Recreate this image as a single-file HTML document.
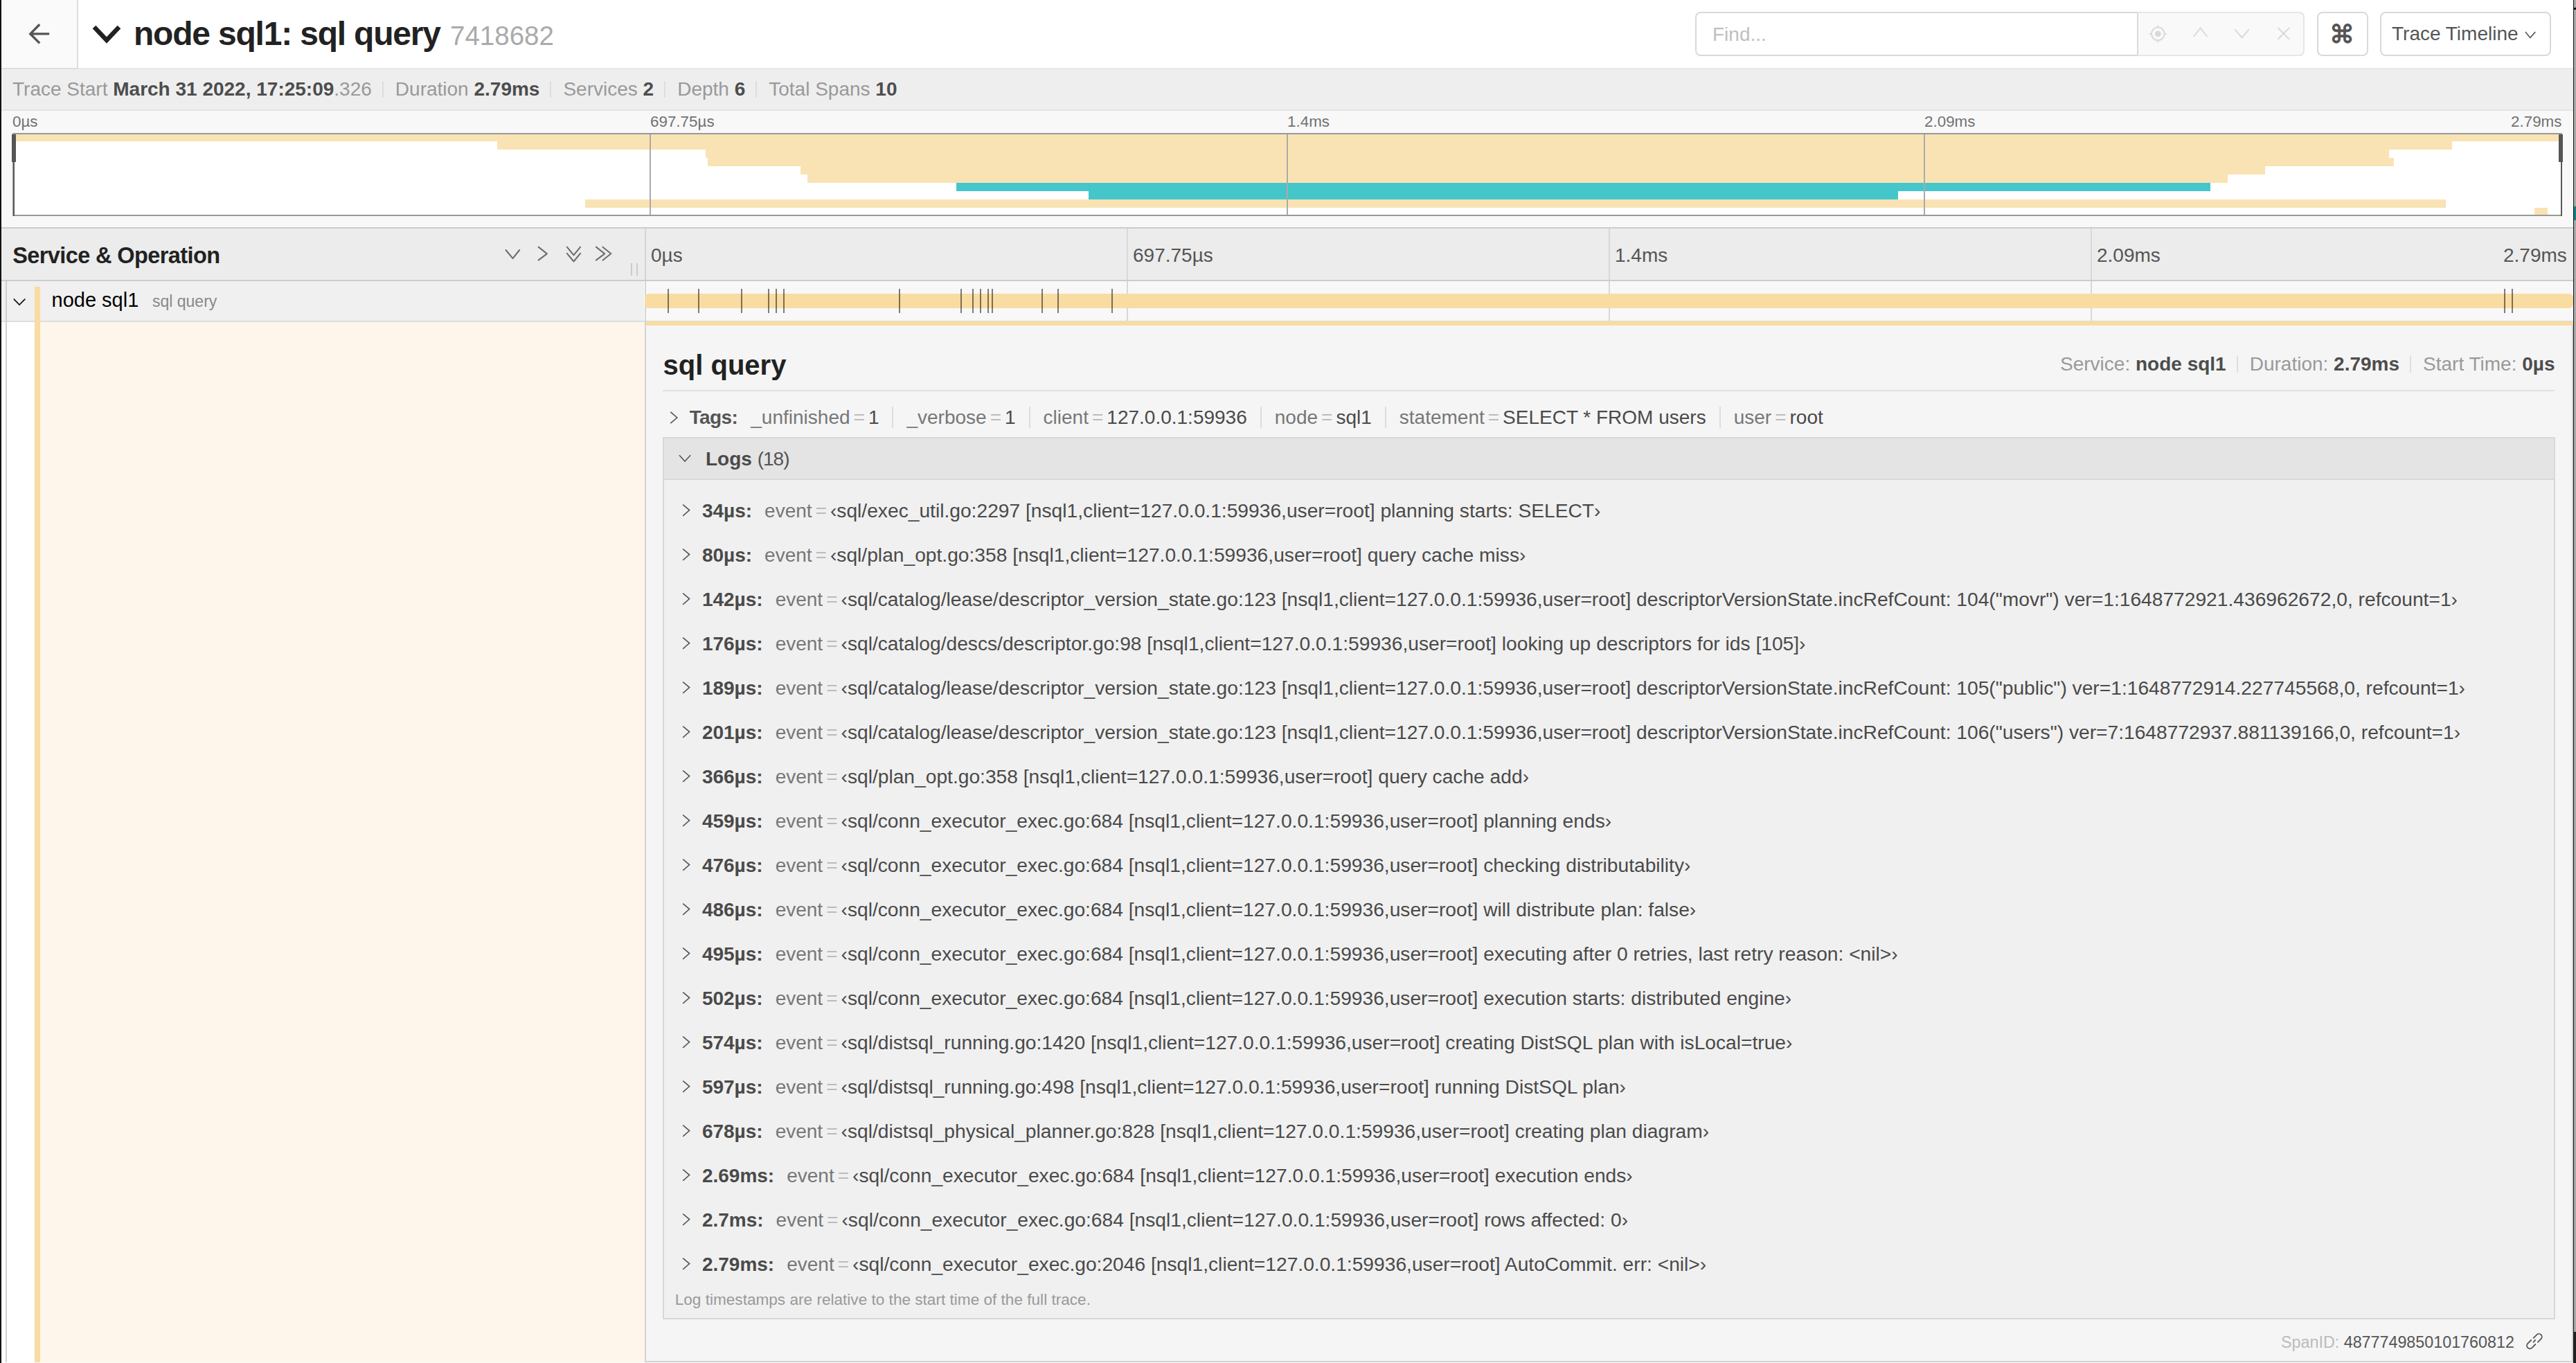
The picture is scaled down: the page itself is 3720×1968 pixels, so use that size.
<!DOCTYPE html><html><head><meta charset="utf-8"><style>
*{margin:0;padding:0}
html,body{width:3720px;height:1968px;overflow:hidden;background:#fff}
body{position:relative;font-family:"Liberation Sans", sans-serif}
body>div,body>svg{position:absolute}
.t{line-height:1;white-space:pre}
.lb{color:#999}
.vb{color:#4d4d4d;font-weight:bold}
.sep{display:inline-block;width:2px;height:24px;background:#ddd;vertical-align:-3px;margin:0 17px 0 15px}
.ti{margin-left:19px;padding-right:19px;border-right:2px solid #ddd}
.ti.last{border-right:none;padding-right:0}
</style></head><body>
<div style="left:0px;top:0px;width:3720px;height:98px;background:#fff;"></div>
<div style="left:0px;top:98px;width:3720px;height:2px;background:#e8e8e8;"></div>
<div style="left:2px;top:0px;width:109px;height:98px;background:#fafafa;"></div>
<div style="left:111px;top:0px;width:2px;height:100px;background:#ddd;"></div>
<div style="left:2px;top:98px;width:111px;height:2px;background:#ddd;"></div>
<svg style="left:40px;top:33px" width="34" height="32" viewBox="0 0 34 32"><path d="M31.2 15.9H5 M17.2 2.2 L3.8 15.9 L17.2 29.4" fill="none" stroke="#555" stroke-width="3.4" stroke-linecap="butt"/></svg>
<svg style="left:132px;top:34px" width="44" height="32" viewBox="0 0 44 32"><path d="M4 5 L22 24 L40 5" fill="none" stroke="#222" stroke-width="6.5"/></svg>
<div class="t" style="left:193px;top:25.1px;font-size:48px;color:#222;font-weight:bold;letter-spacing:-1.2px;">node sql1: sql query</div>
<div class="t" style="left:650px;top:33.1px;font-size:38.5px;color:#aaa;">7418682</div>
<div style="left:2448px;top:17px;width:880px;height:64px;box-sizing:border-box;border:2px solid #d9d9d9;border-radius:8px;background:#fff"></div>
<div style="left:3086px;top:17px;width:242px;height:64px;box-sizing:border-box;border:2px solid #e6e6e6;border-left:2px solid #d9d9d9;border-radius:0 8px 8px 0;background:#f9f9f9"></div>
<div class="t" style="left:2473px;top:36.3px;font-size:28px;color:#bfbfbf;">Find...</div>
<svg style="left:3080px;top:10px" width="240" height="70" viewBox="3080 10 240 70"><g fill="none" stroke="#d9d9d9" stroke-width="2"><circle cx="3116.3" cy="48.9" r="9.3"/><path d="M3116.3 36.5v3.6M3116.3 57.7v3.6M3103.9 48.9h3.6M3125.1 48.9h3.6"/><path d="M3167.8 53 L3177.6 40.5 L3187.6 53"/><path d="M3227.4 42.4 L3237.7 54.4 L3247.7 42.4"/><path d="M3289.4 40 L3306.1 56.8 M3306.1 40 L3289.4 56.8"/></g><circle cx="3116.3" cy="48.9" r="4.4" fill="#d9d9d9"/></svg>
<div style="left:3346px;top:17px;width:74px;height:64px;box-sizing:border-box;border:2px solid #d9d9d9;border-radius:8px;background:#fff"></div>
<div class="t" style="left:3364px;top:31.5px;font-size:36px;color:#555;font-weight:bold;">&#8984;</div>
<div style="left:3437px;top:17px;width:247px;height:64px;box-sizing:border-box;border:2px solid #d9d9d9;border-radius:8px;background:#fff"></div>
<div class="t" style="left:3454px;top:35.3px;font-size:28px;color:#555;">Trace Timeline</div>
<svg style="left:3640px;top:40px" width="30" height="20" viewBox="3640 40 30 20"><path d="M3646.9 46.1 L3653.8 54.6 L3661.3 46.1" fill="none" stroke="#555" stroke-width="1.6"/></svg>
<div style="left:0px;top:100px;width:3720px;height:58px;background:#eee;"></div>
<div style="left:0px;top:158px;width:3720px;height:2px;background:#e4e4e4;"></div>
<div class="t" style="left:18px;top:115.3px;font-size:28px;color:#999;"><span class="lb">Trace Start</span> <b class="vb">March 31 2022, 17:25:09</b><span class="lb">.326</span><i class="sep"></i><span class="lb">Duration</span> <b class="vb">2.79ms</b><i class="sep"></i><span class="lb">Services</span> <b class="vb">2</b><i class="sep"></i><span class="lb">Depth</span> <b class="vb">6</b><i class="sep"></i><span class="lb">Total Spans</span> <b class="vb">10</b></div>
<div style="left:0px;top:160px;width:3720px;height:168px;background:#f8f8f8;"></div>
<div style="left:18px;top:192px;width:3682px;height:120px;background:#fff;"></div>
<div style="left:20px;top:192px;width:3678px;height:12px;background:#f9e3b4;"></div>
<div style="left:718px;top:204px;width:2823px;height:12px;background:#f9e3b4;"></div>
<div style="left:1019px;top:216px;width:2431px;height:12px;background:#f9e3b4;"></div>
<div style="left:1022px;top:228px;width:2435px;height:12px;background:#f9e3b4;"></div>
<div style="left:1156px;top:240px;width:2115px;height:12px;background:#f9e3b4;"></div>
<div style="left:1166px;top:252px;width:2051px;height:12px;background:#f9e3b4;"></div>
<div style="left:1381px;top:264px;width:1811px;height:12px;background:#45c6cb;"></div>
<div style="left:1572px;top:276px;width:1169px;height:12px;background:#45c6cb;"></div>
<div style="left:845px;top:288px;width:2687px;height:12px;background:#f9e3b4;"></div>
<div style="left:3660px;top:300px;width:19px;height:12px;background:#f9e3b4;"></div>
<div style="left:938px;top:192px;width:2px;height:120px;background:#aaa;"></div>
<div style="left:1858px;top:192px;width:2px;height:120px;background:#aaa;"></div>
<div style="left:2778px;top:192px;width:2px;height:120px;background:#aaa;"></div>
<div style="left:18px;top:192px;width:3682px;height:120px;box-sizing:border-box;border:2px solid #999"></div>
<div style="left:19px;top:194px;width:2px;height:118px;background:#5a5a5a;"></div>
<div style="left:3698px;top:194px;width:2px;height:118px;background:#5a5a5a;"></div>
<div style="left:17px;top:194px;width:6px;height:40px;background:#555;"></div>
<div style="left:3695px;top:194px;width:6px;height:40px;background:#555;"></div>
<div class="t" style="left:18px;top:165.2px;font-size:22.4px;color:#717171;">0&micro;s</div>
<div class="t" style="left:939px;top:165.2px;font-size:22.4px;color:#717171;">697.75&micro;s</div>
<div class="t" style="left:1859px;top:165.2px;font-size:22.4px;color:#717171;">1.4ms</div>
<div class="t" style="left:2779px;top:165.2px;font-size:22.4px;color:#717171;">2.09ms</div>
<div class="t" style="left:3626px;top:165.2px;font-size:22.4px;color:#717171;">2.79ms</div>
<div style="left:0px;top:328px;width:3720px;height:2px;background:#ccc;"></div>
<div style="left:0px;top:330px;width:3720px;height:74px;background:#ececec;"></div>
<div style="left:0px;top:404px;width:3720px;height:2px;background:#ccc;"></div>
<div class="t" style="left:18.2px;top:352.9px;font-size:32.5px;color:#222;font-weight:bold;letter-spacing:-0.6px;">Service &amp; Operation</div>
<svg style="left:710px;top:340px" width="200" height="50" viewBox="710 340 200 50"><g fill="none" stroke="#6e6e6e" stroke-width="2.1" stroke-linecap="round" stroke-linejoin="round"><path d="M730.5 361 L740.5 373.2 L750.2 361"/><path d="M777.6 356.7 L789.9 366.3 L777.6 375.7"/><path d="M818.8 356.7 L828.5 368.4 L838.1 356.7 M818.8 365.9 L828.5 377.5 L838.1 365.9"/><path d="M860.9 356.7 L873.2 366.3 L860.9 375.7 M870.4 356.7 L882.3 366.3 L870.4 375.7"/></g></svg>
<div style="left:911px;top:380px;width:2px;height:18px;background:#ccc;"></div>
<div style="left:919px;top:380px;width:2px;height:18px;background:#ccc;"></div>
<div style="left:931px;top:330px;width:2px;height:74px;background:#d5d5d5;"></div>
<div class="t" style="left:940px;top:354.7px;font-size:28px;color:#555;">0&micro;s</div>
<div class="t" style="left:1636px;top:354.7px;font-size:28px;color:#555;">697.75&micro;s</div>
<div class="t" style="left:2332px;top:354.7px;font-size:28px;color:#555;">1.4ms</div>
<div class="t" style="left:3028px;top:354.7px;font-size:28px;color:#555;">2.09ms</div>
<div class="t" style="left:3615px;top:354.7px;font-size:28px;color:#555;">2.79ms</div>
<div style="left:1627px;top:330px;width:2px;height:74px;background:#d8d8d8;"></div>
<div style="left:2323px;top:330px;width:2px;height:74px;background:#d8d8d8;"></div>
<div style="left:3019px;top:330px;width:2px;height:74px;background:#d8d8d8;"></div>
<div style="left:2px;top:406px;width:928px;height:57px;background:#f0f0f0;"></div>
<div style="left:932px;top:406px;width:2784px;height:57px;background:#f8f8f8;"></div>
<div style="left:0px;top:463px;width:3720px;height:2px;background:#ddd;"></div>
<div style="left:8px;top:406px;width:2px;height:1562px;background:#d0d0d0;"></div>
<div style="left:931px;top:406px;width:2px;height:58px;background:#d5d5d5;"></div>
<div style="left:1627px;top:406px;width:2px;height:57px;background:#d8d8d8;"></div>
<div style="left:2323px;top:406px;width:2px;height:57px;background:#d8d8d8;"></div>
<div style="left:3019px;top:406px;width:2px;height:57px;background:#d8d8d8;"></div>
<svg style="left:10px;top:420px" width="36" height="30" viewBox="10 420 36 30"><path d="M19.8 431.6 L28 440 L36.3 431.6" fill="none" stroke="#111" stroke-width="1.7"/></svg>
<div class="t" style="left:74.5px;top:419.0px;font-size:29px;color:#000;">node sql1</div>
<div class="t" style="left:220px;top:424.0px;font-size:23px;color:#888;">sql query</div>
<div style="left:931px;top:424px;width:2785px;height:21px;background:#f8dca1;border-radius:6px"></div>
<div style="left:964px;top:417px;width:2px;height:35px;background:rgba(0,0,0,0.5);"></div>
<div style="left:1008px;top:417px;width:2px;height:35px;background:rgba(0,0,0,0.5);"></div>
<div style="left:1070px;top:417px;width:2px;height:35px;background:rgba(0,0,0,0.5);"></div>
<div style="left:1109px;top:417px;width:2px;height:35px;background:rgba(0,0,0,0.5);"></div>
<div style="left:1120px;top:417px;width:2px;height:35px;background:rgba(0,0,0,0.5);"></div>
<div style="left:1131px;top:417px;width:2px;height:35px;background:rgba(0,0,0,0.5);"></div>
<div style="left:1298px;top:417px;width:2px;height:35px;background:rgba(0,0,0,0.5);"></div>
<div style="left:1387px;top:417px;width:2px;height:35px;background:rgba(0,0,0,0.5);"></div>
<div style="left:1404px;top:417px;width:2px;height:35px;background:rgba(0,0,0,0.5);"></div>
<div style="left:1415px;top:417px;width:2px;height:35px;background:rgba(0,0,0,0.5);"></div>
<div style="left:1426px;top:417px;width:2px;height:35px;background:rgba(0,0,0,0.5);"></div>
<div style="left:1432px;top:417px;width:2px;height:35px;background:rgba(0,0,0,0.5);"></div>
<div style="left:1504px;top:417px;width:2px;height:35px;background:rgba(0,0,0,0.5);"></div>
<div style="left:1527px;top:417px;width:2px;height:35px;background:rgba(0,0,0,0.5);"></div>
<div style="left:1605px;top:417px;width:2px;height:35px;background:rgba(0,0,0,0.5);"></div>
<div style="left:3616px;top:417px;width:2px;height:35px;background:rgba(0,0,0,0.5);"></div>
<div style="left:3627px;top:417px;width:2px;height:35px;background:rgba(0,0,0,0.5);"></div>
<div style="left:2px;top:465px;width:928px;height:1503px;background:#fff;"></div>
<div style="left:58px;top:465px;width:873px;height:1503px;background:#fef6ea;"></div>
<div style="left:50px;top:414px;width:8px;height:1554px;background:#f8dca1;"></div>
<div style="left:8px;top:465px;width:2px;height:1503px;background:#d0d0d0;"></div>
<div style="left:932px;top:464px;width:2784px;height:6px;background:#f8dca1;"></div>
<div style="left:932px;top:470px;width:2784px;height:1498px;background:#f5f5f5;"></div>
<div style="left:931px;top:464px;width:2px;height:1504px;background:#d3d3d3;"></div>
<div style="left:3714px;top:470px;width:2px;height:1498px;background:#d3d3d3;"></div>
<div style="left:931px;top:1965px;width:2785px;height:2px;background:#d3d3d3;"></div>
<div style="left:2px;top:1967px;width:3714px;height:1px;background:#fbfbfb;"></div>
<div class="t" style="left:957.6px;top:507.1px;font-size:40px;color:#222;font-weight:bold;">sql query</div>
<div class="t" style="right:30.5px;top:512.2px;font-size:28px;color:#999"><span class="lb">Service:</span> <b class="vb">node sql1</b><i class="sep"></i><span class="lb">Duration:</span> <b class="vb">2.79ms</b><i class="sep"></i><span class="lb">Start Time:</span> <b class="vb">0&micro;s</b></div>
<div style="left:957px;top:563px;width:2732px;height:2px;background:#e0e0e0;"></div>
<svg style="left:960px;top:588px" width="30" height="30" viewBox="960 588 30 30"><path d="M968.3 594.9 L977.8 603 L968.3 611.2" fill="none" stroke="#555" stroke-width="1.6"/></svg>
<div class="t" style="left:995.7px;top:589.4px;font-size:28px;color:#4a4a4a;"><b class="vb" style="color:#555;letter-spacing:-0.6px">Tags:</b><span class="ti"><span style="color:#777">_unfinished</span><span style="color:#bbb;padding:0 5px">=</span>1</span><span class="ti"><span style="color:#777">_verbose</span><span style="color:#bbb;padding:0 5px">=</span>1</span><span class="ti"><span style="color:#777">client</span><span style="color:#bbb;padding:0 5px">=</span>127.0.0.1:59936</span><span class="ti"><span style="color:#777">node</span><span style="color:#bbb;padding:0 5px">=</span>sql1</span><span class="ti"><span style="color:#777">statement</span><span style="color:#bbb;padding:0 5px">=</span>SELECT * FROM users</span><span class="ti last"><span style="color:#777">user</span><span style="color:#bbb;padding:0 5px">=</span>root</span></div>
<div style="left:957px;top:631px;width:2733px;height:1274px;background:#f0f0f0;"></div>
<div style="left:957px;top:631px;width:2733px;height:1274px;box-sizing:border-box;border:2px solid #d8d8d8"></div>
<div style="left:959px;top:633px;width:2729px;height:58px;background:#e4e4e4;"></div>
<div style="left:959px;top:691px;width:2729px;height:2px;background:#d8d8d8;"></div>
<svg style="left:970px;top:645px" width="40" height="30" viewBox="970 645 40 30"><path d="M981 657.2 L989 666.1 L997.2 657.2" fill="none" stroke="#555" stroke-width="1.6"/></svg>
<div class="t" style="left:1019px;top:648.8px;font-size:28px;color:#444;"><b style="color:#4a4a4a">Logs</b> <span style="color:#555;letter-spacing:-1px">(18)</span></div>
<svg style="left:980px;top:722.7px" width="24" height="28" viewBox="980 -24 24 28"><path d="M986.2 -18.4 L995.6 -10.4 L986.2 -2.2" fill="none" stroke="#555" stroke-width="1.6"/></svg>
<div class="t" style="left:1013.9px;top:723.0px;font-size:28px;color:#4a4a4a;"><b style="color:#4a4a4a">34&micro;s:</b><span style="color:#777;margin-left:18px">event</span><span style="color:#bbb;padding:0 5px">=</span><span style="font-size:28.2px">&#8249;sql/exec_util.go:2297 [nsql1,client=127.0.0.1:59936,user=root] planning starts: SELECT&#8250;</span></div>
<svg style="left:980px;top:786.7px" width="24" height="28" viewBox="980 -24 24 28"><path d="M986.2 -18.4 L995.6 -10.4 L986.2 -2.2" fill="none" stroke="#555" stroke-width="1.6"/></svg>
<div class="t" style="left:1013.9px;top:787.0px;font-size:28px;color:#4a4a4a;"><b style="color:#4a4a4a">80&micro;s:</b><span style="color:#777;margin-left:18px">event</span><span style="color:#bbb;padding:0 5px">=</span><span style="font-size:28.2px">&#8249;sql/plan_opt.go:358 [nsql1,client=127.0.0.1:59936,user=root] query cache miss&#8250;</span></div>
<svg style="left:980px;top:850.7px" width="24" height="28" viewBox="980 -24 24 28"><path d="M986.2 -18.4 L995.6 -10.4 L986.2 -2.2" fill="none" stroke="#555" stroke-width="1.6"/></svg>
<div class="t" style="left:1013.9px;top:851.0px;font-size:28px;color:#4a4a4a;"><b style="color:#4a4a4a">142&micro;s:</b><span style="color:#777;margin-left:18px">event</span><span style="color:#bbb;padding:0 5px">=</span><span style="font-size:28.2px">&#8249;sql/catalog/lease/descriptor_version_state.go:123 [nsql1,client=127.0.0.1:59936,user=root] descriptorVersionState.incRefCount: 104("movr") ver=1:1648772921.436962672,0, refcount=1&#8250;</span></div>
<svg style="left:980px;top:914.7px" width="24" height="28" viewBox="980 -24 24 28"><path d="M986.2 -18.4 L995.6 -10.4 L986.2 -2.2" fill="none" stroke="#555" stroke-width="1.6"/></svg>
<div class="t" style="left:1013.9px;top:915.0px;font-size:28px;color:#4a4a4a;"><b style="color:#4a4a4a">176&micro;s:</b><span style="color:#777;margin-left:18px">event</span><span style="color:#bbb;padding:0 5px">=</span><span style="font-size:28.2px">&#8249;sql/catalog/descs/descriptor.go:98 [nsql1,client=127.0.0.1:59936,user=root] looking up descriptors for ids [105]&#8250;</span></div>
<svg style="left:980px;top:978.7px" width="24" height="28" viewBox="980 -24 24 28"><path d="M986.2 -18.4 L995.6 -10.4 L986.2 -2.2" fill="none" stroke="#555" stroke-width="1.6"/></svg>
<div class="t" style="left:1013.9px;top:979.0px;font-size:28px;color:#4a4a4a;"><b style="color:#4a4a4a">189&micro;s:</b><span style="color:#777;margin-left:18px">event</span><span style="color:#bbb;padding:0 5px">=</span><span style="font-size:28.2px">&#8249;sql/catalog/lease/descriptor_version_state.go:123 [nsql1,client=127.0.0.1:59936,user=root] descriptorVersionState.incRefCount: 105("public") ver=1:1648772914.227745568,0, refcount=1&#8250;</span></div>
<svg style="left:980px;top:1042.7px" width="24" height="28" viewBox="980 -24 24 28"><path d="M986.2 -18.4 L995.6 -10.4 L986.2 -2.2" fill="none" stroke="#555" stroke-width="1.6"/></svg>
<div class="t" style="left:1013.9px;top:1043.0px;font-size:28px;color:#4a4a4a;"><b style="color:#4a4a4a">201&micro;s:</b><span style="color:#777;margin-left:18px">event</span><span style="color:#bbb;padding:0 5px">=</span><span style="font-size:28.2px">&#8249;sql/catalog/lease/descriptor_version_state.go:123 [nsql1,client=127.0.0.1:59936,user=root] descriptorVersionState.incRefCount: 106("users") ver=7:1648772937.881139166,0, refcount=1&#8250;</span></div>
<svg style="left:980px;top:1106.7px" width="24" height="28" viewBox="980 -24 24 28"><path d="M986.2 -18.4 L995.6 -10.4 L986.2 -2.2" fill="none" stroke="#555" stroke-width="1.6"/></svg>
<div class="t" style="left:1013.9px;top:1107.0px;font-size:28px;color:#4a4a4a;"><b style="color:#4a4a4a">366&micro;s:</b><span style="color:#777;margin-left:18px">event</span><span style="color:#bbb;padding:0 5px">=</span><span style="font-size:28.2px">&#8249;sql/plan_opt.go:358 [nsql1,client=127.0.0.1:59936,user=root] query cache add&#8250;</span></div>
<svg style="left:980px;top:1170.7px" width="24" height="28" viewBox="980 -24 24 28"><path d="M986.2 -18.4 L995.6 -10.4 L986.2 -2.2" fill="none" stroke="#555" stroke-width="1.6"/></svg>
<div class="t" style="left:1013.9px;top:1171.0px;font-size:28px;color:#4a4a4a;"><b style="color:#4a4a4a">459&micro;s:</b><span style="color:#777;margin-left:18px">event</span><span style="color:#bbb;padding:0 5px">=</span><span style="font-size:28.2px">&#8249;sql/conn_executor_exec.go:684 [nsql1,client=127.0.0.1:59936,user=root] planning ends&#8250;</span></div>
<svg style="left:980px;top:1234.7px" width="24" height="28" viewBox="980 -24 24 28"><path d="M986.2 -18.4 L995.6 -10.4 L986.2 -2.2" fill="none" stroke="#555" stroke-width="1.6"/></svg>
<div class="t" style="left:1013.9px;top:1235.0px;font-size:28px;color:#4a4a4a;"><b style="color:#4a4a4a">476&micro;s:</b><span style="color:#777;margin-left:18px">event</span><span style="color:#bbb;padding:0 5px">=</span><span style="font-size:28.2px">&#8249;sql/conn_executor_exec.go:684 [nsql1,client=127.0.0.1:59936,user=root] checking distributability&#8250;</span></div>
<svg style="left:980px;top:1298.7px" width="24" height="28" viewBox="980 -24 24 28"><path d="M986.2 -18.4 L995.6 -10.4 L986.2 -2.2" fill="none" stroke="#555" stroke-width="1.6"/></svg>
<div class="t" style="left:1013.9px;top:1299.0px;font-size:28px;color:#4a4a4a;"><b style="color:#4a4a4a">486&micro;s:</b><span style="color:#777;margin-left:18px">event</span><span style="color:#bbb;padding:0 5px">=</span><span style="font-size:28.2px">&#8249;sql/conn_executor_exec.go:684 [nsql1,client=127.0.0.1:59936,user=root] will distribute plan: false&#8250;</span></div>
<svg style="left:980px;top:1362.7px" width="24" height="28" viewBox="980 -24 24 28"><path d="M986.2 -18.4 L995.6 -10.4 L986.2 -2.2" fill="none" stroke="#555" stroke-width="1.6"/></svg>
<div class="t" style="left:1013.9px;top:1363.0px;font-size:28px;color:#4a4a4a;"><b style="color:#4a4a4a">495&micro;s:</b><span style="color:#777;margin-left:18px">event</span><span style="color:#bbb;padding:0 5px">=</span><span style="font-size:28.2px">&#8249;sql/conn_executor_exec.go:684 [nsql1,client=127.0.0.1:59936,user=root] executing after 0 retries, last retry reason: &lt;nil&gt;&#8250;</span></div>
<svg style="left:980px;top:1426.7px" width="24" height="28" viewBox="980 -24 24 28"><path d="M986.2 -18.4 L995.6 -10.4 L986.2 -2.2" fill="none" stroke="#555" stroke-width="1.6"/></svg>
<div class="t" style="left:1013.9px;top:1427.0px;font-size:28px;color:#4a4a4a;"><b style="color:#4a4a4a">502&micro;s:</b><span style="color:#777;margin-left:18px">event</span><span style="color:#bbb;padding:0 5px">=</span><span style="font-size:28.2px">&#8249;sql/conn_executor_exec.go:684 [nsql1,client=127.0.0.1:59936,user=root] execution starts: distributed engine&#8250;</span></div>
<svg style="left:980px;top:1490.7px" width="24" height="28" viewBox="980 -24 24 28"><path d="M986.2 -18.4 L995.6 -10.4 L986.2 -2.2" fill="none" stroke="#555" stroke-width="1.6"/></svg>
<div class="t" style="left:1013.9px;top:1491.0px;font-size:28px;color:#4a4a4a;"><b style="color:#4a4a4a">574&micro;s:</b><span style="color:#777;margin-left:18px">event</span><span style="color:#bbb;padding:0 5px">=</span><span style="font-size:28.2px">&#8249;sql/distsql_running.go:1420 [nsql1,client=127.0.0.1:59936,user=root] creating DistSQL plan with isLocal=true&#8250;</span></div>
<svg style="left:980px;top:1554.7px" width="24" height="28" viewBox="980 -24 24 28"><path d="M986.2 -18.4 L995.6 -10.4 L986.2 -2.2" fill="none" stroke="#555" stroke-width="1.6"/></svg>
<div class="t" style="left:1013.9px;top:1555.0px;font-size:28px;color:#4a4a4a;"><b style="color:#4a4a4a">597&micro;s:</b><span style="color:#777;margin-left:18px">event</span><span style="color:#bbb;padding:0 5px">=</span><span style="font-size:28.2px">&#8249;sql/distsql_running.go:498 [nsql1,client=127.0.0.1:59936,user=root] running DistSQL plan&#8250;</span></div>
<svg style="left:980px;top:1618.7px" width="24" height="28" viewBox="980 -24 24 28"><path d="M986.2 -18.4 L995.6 -10.4 L986.2 -2.2" fill="none" stroke="#555" stroke-width="1.6"/></svg>
<div class="t" style="left:1013.9px;top:1619.0px;font-size:28px;color:#4a4a4a;"><b style="color:#4a4a4a">678&micro;s:</b><span style="color:#777;margin-left:18px">event</span><span style="color:#bbb;padding:0 5px">=</span><span style="font-size:28.2px">&#8249;sql/distsql_physical_planner.go:828 [nsql1,client=127.0.0.1:59936,user=root] creating plan diagram&#8250;</span></div>
<svg style="left:980px;top:1682.7px" width="24" height="28" viewBox="980 -24 24 28"><path d="M986.2 -18.4 L995.6 -10.4 L986.2 -2.2" fill="none" stroke="#555" stroke-width="1.6"/></svg>
<div class="t" style="left:1013.9px;top:1683.0px;font-size:28px;color:#4a4a4a;"><b style="color:#4a4a4a">2.69ms:</b><span style="color:#777;margin-left:18px">event</span><span style="color:#bbb;padding:0 5px">=</span><span style="font-size:28.2px">&#8249;sql/conn_executor_exec.go:684 [nsql1,client=127.0.0.1:59936,user=root] execution ends&#8250;</span></div>
<svg style="left:980px;top:1746.7px" width="24" height="28" viewBox="980 -24 24 28"><path d="M986.2 -18.4 L995.6 -10.4 L986.2 -2.2" fill="none" stroke="#555" stroke-width="1.6"/></svg>
<div class="t" style="left:1013.9px;top:1747.0px;font-size:28px;color:#4a4a4a;"><b style="color:#4a4a4a">2.7ms:</b><span style="color:#777;margin-left:18px">event</span><span style="color:#bbb;padding:0 5px">=</span><span style="font-size:28.2px">&#8249;sql/conn_executor_exec.go:684 [nsql1,client=127.0.0.1:59936,user=root] rows affected: 0&#8250;</span></div>
<svg style="left:980px;top:1810.7px" width="24" height="28" viewBox="980 -24 24 28"><path d="M986.2 -18.4 L995.6 -10.4 L986.2 -2.2" fill="none" stroke="#555" stroke-width="1.6"/></svg>
<div class="t" style="left:1013.9px;top:1811.0px;font-size:28px;color:#4a4a4a;"><b style="color:#4a4a4a">2.79ms:</b><span style="color:#777;margin-left:18px">event</span><span style="color:#bbb;padding:0 5px">=</span><span style="font-size:28.2px">&#8249;sql/conn_executor_exec.go:2046 [nsql1,client=127.0.0.1:59936,user=root] AutoCommit. err: &lt;nil&gt;&#8250;</span></div>
<div class="t" style="left:974.7px;top:1865.5px;font-size:22.6px;color:#999;">Log timestamps are relative to the start time of the full trace.</div>
<div class="t" style="left:3294px;top:1927.3px;font-size:23.3px;color:#555;"><span style="color:#bbb">SpanID:</span> <span style="color:#555">4877749850101760812</span></div>
<svg style="left:3636px;top:1916px" width="48" height="40" viewBox="3636 1916 48 40"><g fill="none" stroke="#555" stroke-width="1.8" stroke-linecap="round"><path d="M3658.6 1931.9 L3663.46 1927.06 A4.3 4.3 0 0 1 3669.54 1933.14 L3664.9 1937.8"/><path d="M3655.2 1935 L3650.26 1939.96 A4.3 4.3 0 0 0 3656.34 1946.04 L3661.4 1941"/><path d="M3658.6 1937.9 L3661.2 1934.9"/></g></svg>
<div style="left:0px;top:0px;width:2px;height:1968px;background:#111;"></div>
<div style="left:3716px;top:0px;width:1px;height:1968px;background:#111;"></div>
<div style="left:3717px;top:0px;width:3px;height:1968px;background:#aaa;"></div>
<div style="left:3717px;top:1923px;width:3px;height:45px;background:#222;"></div>
<div style="left:3717px;top:298px;width:3px;height:20px;background:#127f82;"></div>
<div style="left:3716px;top:11px;width:4px;height:3px;background:#111;"></div>
</body></html>
